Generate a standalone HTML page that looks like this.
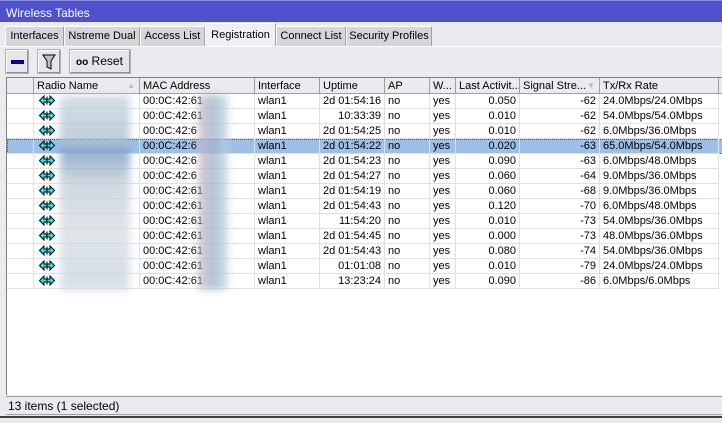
<!DOCTYPE html>
<html><head><meta charset="utf-8"><style>
*{margin:0;padding:0;box-sizing:border-box}
body{width:722px;height:423px;background:#ebeaef;font-family:"Liberation Sans",Arial,sans-serif;font-size:11px;color:#000;position:relative;overflow:hidden}
.title{position:absolute;left:0;top:0;width:722px;height:22px;background:#4f50cc;color:#fff;font-size:12px;line-height:24px;padding-left:6px;border-top:1px solid #8888dd}
.tab{position:absolute;top:26px;height:20px;background:#d6d5da;border:1px solid #fff;border-right-color:#a0a0a0;border-bottom:none;font-size:11px;line-height:19px;text-align:center;white-space:nowrap;overflow:hidden}
.tab.act{top:23px;height:24px;background:#f0eff4;line-height:23px;border-right-color:#a0a0a0}
.btn{position:absolute;top:50px;height:23px;border:1px solid #fff;border-right-color:#909090;border-bottom-color:#909090;background:#e6e5ea;outline:1px solid #b0b0b0}
.grid{position:absolute;left:6px;top:77px;width:716px;height:318px;background:#fff;border-left:1px solid #808080;border-top:1px solid #808080}
.hdr{position:absolute;top:0;height:16px;background:#ebeaef;border-right:1px solid #a0a0a0;border-bottom:1px solid #a0a0a0;line-height:16px;padding-left:3px;font-size:11px;white-space:nowrap;overflow:hidden}
.row{position:absolute;left:0;width:716px;height:15px}
.row.sel{background:#9dbfe8;outline:1px dotted #555;outline-offset:-1px}
.c{position:absolute;top:0;height:15px;line-height:15px;border-right:1px solid #e0e0e0;border-bottom:1px solid #e0e0e0;padding:0 3px;white-space:nowrap;overflow:hidden;font-size:11px}
.r{text-align:right}
.status{position:absolute;left:6px;top:396px;width:716px;height:19px;border-top:1px solid #a0a0a0;border-bottom:1px solid #a0a0a0;line-height:19px;padding-left:2px;font-size:12px}
.blur{position:absolute;filter:blur(4px);opacity:.75}
</style></head><body>
<div class="title">Wireless Tables</div>
<div class="tab" style="left:5px;width:59px">Interfaces</div>
<div class="tab" style="left:64px;width:76px">Nstreme Dual</div>
<div class="tab" style="left:140px;width:65px">Access List</div>
<div class="tab act" style="left:205px;width:71px">Registration</div>
<div class="tab" style="left:276px;width:70px">Connect List</div>
<div class="tab" style="left:346px;width:86px">Security Profiles</div>
<div style="position:absolute;left:0;top:46px;width:722px;height:1px;background:#fff"></div>
<div style="position:absolute;left:0;top:416px;width:722px;height:2px;background:#404040"></div>
<div class="btn" style="left:6px;width:22px"><div style="position:absolute;left:4px;top:9px;width:13px;height:4px;background:#0000d0;border:1px solid #000066"></div></div>
<div class="btn" style="left:38px;width:22px"><svg width="20" height="21" style="position:absolute;left:0;top:0"><path d="M4 4h12l-4 6v8l-4-2v-6z" fill="#b8c4cc" stroke="#000" stroke-width="1"/></svg></div>
<div class="btn" style="left:70px;width:60px;font-size:12px;line-height:21px;padding-left:5px"><b style="font-size:10px">oo</b> Reset</div>
<div class="grid" id="g">
<div class="hdr" style="left:0;width:27px"></div>
<div class="hdr" style="left:27px;width:106px">Radio Name<span style="position:absolute;right:4px;color:#bbb;font-size:8px">▲</span></div>
<div class="hdr" style="left:133px;width:115px">MAC Address</div>
<div class="hdr" style="left:248px;width:65px">Interface</div>
<div class="hdr" style="left:313px;width:65px">Uptime</div>
<div class="hdr" style="left:378px;width:45px">AP</div>
<div class="hdr" style="left:423px;width:26px">W...</div>
<div class="hdr" style="left:449px;width:64px">Last Activit...</div>
<div class="hdr" style="left:513px;width:80px">Signal Stre...<span style="position:absolute;right:4px;color:#bbb;font-size:8px">▼</span></div>
<div class="hdr" style="left:593px;width:119px">Tx/Rx Rate</div>
<div class="hdr" style="left:712px;width:10px"></div>
</div>
<div class="blur" style="left:60px;top:95px;width:70px;height:195px;background:linear-gradient(180deg,#c8d4dc,#a8bcd0 25%,#7898c0 30%,#c0ccd4 45%,#d4dce0 70%,#c8d4dc)"></div>
<div class="blur" style="left:198px;top:95px;width:30px;height:195px;background:linear-gradient(90deg,#d0b8c0,#98b0cc,#c8d4dc)"></div>
<div class="status">13 items (1 selected)</div>
<script>
var d=[["2d 01:54:16","0.050","-62","24.0Mbps/24.0Mbps"],["10:33:39","0.010","-62","54.0Mbps/54.0Mbps"],["2d 01:54:25","0.010","-62","6.0Mbps/36.0Mbps"],["2d 01:54:22","0.020","-63","65.0Mbps/54.0Mbps"],["2d 01:54:23","0.090","-63","6.0Mbps/48.0Mbps"],["2d 01:54:27","0.060","-64","9.0Mbps/36.0Mbps"],["2d 01:54:19","0.060","-68","9.0Mbps/36.0Mbps"],["2d 01:54:43","0.120","-70","6.0Mbps/48.0Mbps"],["11:54:20","0.010","-73","54.0Mbps/36.0Mbps"],["2d 01:54:45","0.000","-73","48.0Mbps/36.0Mbps"],["2d 01:54:43","0.080","-74","54.0Mbps/36.0Mbps"],["01:01:08","0.010","-79","24.0Mbps/24.0Mbps"],["13:23:24","0.090","-86","6.0Mbps/6.0Mbps"]];
var ic='<svg width="16" height="11" style="vertical-align:-2px"><path d="M0.5 5.5L5 1v3h6V1l4.5 4.5L11 10V7H5v3z" fill="#2ee8f0" stroke="#000" stroke-width="1"/><path d="M8 1.5v8" stroke="#000" stroke-width="1"/></svg>';
var h='';
d.forEach(function(r,i){var mac=i==3||i==4||i==5||i==2?"00:0C:42:6":"00:0C:42:61";
h+='<div class="row'+(i==3?' sel':'')+'" style="top:'+(16+i*15)+'px">'+
'<div class="c" style="left:0;width:27px"></div><div class="c" style="left:27px;width:106px;padding-left:5px">'+ic+'</div>'+
'<div class="c" style="left:133px;width:115px">'+mac+'</div><div class="c" style="left:248px;width:65px">wlan1</div>'+
'<div class="c r" style="left:313px;width:65px">'+r[0]+'</div><div class="c" style="left:378px;width:45px">no</div>'+
'<div class="c" style="left:423px;width:26px">yes</div><div class="c r" style="left:449px;width:64px">'+r[1]+'</div>'+
'<div class="c r" style="left:513px;width:80px">'+r[2]+'</div><div class="c" style="left:593px;width:119px">'+r[3]+'</div></div>';});
document.getElementById('g').insertAdjacentHTML('beforeend',h);
</script>
</body></html>
